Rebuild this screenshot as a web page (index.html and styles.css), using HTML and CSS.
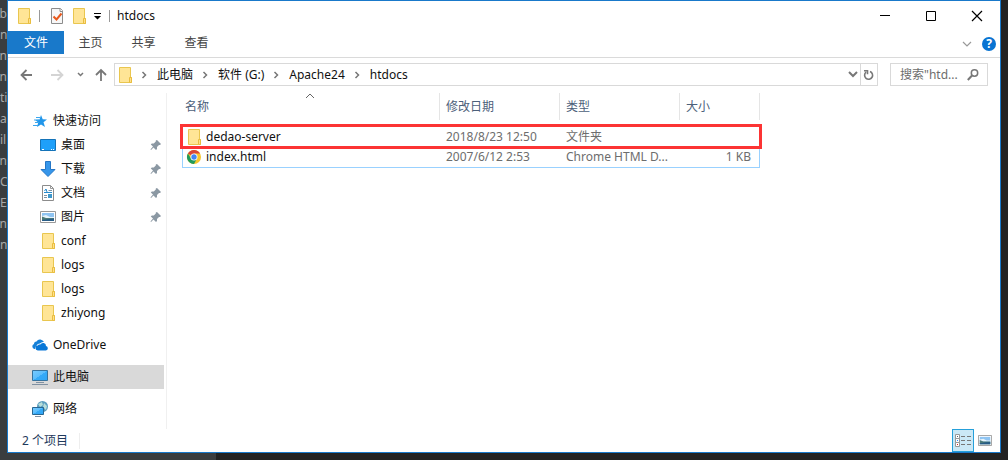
FILE: index.html
```html
<!DOCTYPE html>
<html lang="zh-CN">
<head>
<meta charset="utf-8">
<title>htdocs</title>
<link rel="stylesheet" href="styles.css">
</head>
<body>
<svg class="defs" aria-hidden="true">
  <symbol id="folder" viewBox="0 0 16 16"><path d="M2.500.5h11v10h1v5h-12z" fill="#ffe596" stroke="#e9c64f"/><path d="M12.500 15.500v-5h2v5z" fill="#ffe08a" stroke="#e9bd40"/></symbol>
  <symbol id="pin" viewBox="0 0 12 12"><path d="M7 1l4 4-1 1-1 0-2 2 0 2-1 1-2.500-2.500L1 11l-.5-.5L3 7.500.8 5.500l1-1h2l2-2V1.500z" fill="#8b98a3"/></symbol>
  <symbol id="chev" viewBox="0 0 6 8"><path d="M1.500 1l3 3-3 3" fill="none" stroke="#777" stroke-width="1.500"/></symbol>
  <symbol id="photo" viewBox="0 0 16 12"><path d="M.5.500h15v11H.5z" fill="#fff" stroke="#999"/><path d="M2 2h12v8H2z" fill="#8fc4f2"/><path d="M2 5l4-1 4 2h4v1H2z" fill="#e6f3fb"/><path d="M2 5.500l4 1.500 8 0v3H2z" fill="#4c7b78"/><path d="M2 9l7-1 5-.5V10H2z" fill="#275c86"/></symbol>
  <linearGradient id="screen" x2="1" y2="1"><stop stop-color="#78cbff"/><stop offset=".5" stop-color="#5bbdfc"/><stop offset=".5" stop-color="#35aaf8"/><stop offset="1" stop-color="#2fa5f5"/></linearGradient>
</svg>
<div class="desktop">
  <div class="editor" aria-hidden="true"><span class="tail">ub</span><span>nt</span><span class="tail">in</span><span class="tail">n</span><span>ti</span><span>a</span><span>il</span><span class="tail">n</span><span>CI</span><span>EA</span><span class="tail">in</span><span>na</span></div>
  <main class="window">
    <header class="titlebar">
      <svg class="i16"><use href="#folder"/></svg>
      <span class="sep sep-first"></span>
      <button class="plain" aria-label="属性"><svg class="i16" viewBox="0 0 16 16"><path d="M2.500.5h9l2 2v13h-11z" fill="#f7f7f7" stroke="#8c8c8c"/><path d="M11 .5v3h3" fill="#fff" stroke="#8c8c8c"/><path d="M4.500 8.500l3 3 5-6" fill="none" stroke="#e8581c" stroke-width="2"/></svg></button>
      <button class="plain new-folder" aria-label="新建文件夹"><svg class="i16"><use href="#folder"/></svg></button>
      <button class="plain customize" aria-label="自定义"><svg width="8" height="8" viewBox="0 0 8 8"><path d="M0 1h7v1H0zM0 4h7L3.500 7.500z"/></svg></button>
      <span class="sep"></span>
      <h1>htdocs</h1>
      <div class="controls">
        <button class="plain" aria-label="最小化"><svg width="12" height="12" viewBox="0 0 12 12"><path d="M1 5.500h10" stroke="#000"/></svg></button>
        <button class="plain" aria-label="最大化"><svg width="12" height="12" viewBox="0 0 12 12"><path d="M1.500 1.500h9v9h-9z" fill="none" stroke="#000"/></svg></button>
        <button class="plain" aria-label="关闭"><svg width="12" height="12" viewBox="0 0 12 12"><path d="M1 1l10 10M11 1L1 11" stroke="#000" stroke-width="1.200"/></svg></button>
      </div>
    </header>
    <nav class="ribbon">
      <button class="tab file">文件</button><button class="tab">主页</button><button class="tab">共享</button><button class="tab">查看</button>
      <button class="plain expand" aria-label="展开功能区"><svg width="10" height="6" viewBox="0 0 10 6"><path d="M1 1l4 4 4-4" fill="none" stroke="#999" stroke-width="1.200"/></svg></button>
      <button class="help" aria-label="帮助">?</button>
    </nav>
    <div class="toolbar">
      <button class="plain" aria-label="后退"><svg width="14" height="12" viewBox="0 0 14 12"><path d="M12 6H2M6.500 1L1.500 6l5 5" fill="none" stroke="#777" stroke-width="1.800"/></svg></button>
      <button class="plain forward" aria-label="前进"><svg width="14" height="12" viewBox="0 0 14 12"><path d="M1 6h11M7.500 1l5 5-5 5" fill="none" stroke="#d4d4d4" stroke-width="1.800"/></svg></button>
      <button class="plain recent" aria-label="最近"><svg width="7" height="5" viewBox="0 0 7 5"><path d="M1 1l2.500 2.500L6 1" fill="none" stroke="#777" stroke-width="1.500"/></svg></button>
      <button class="plain up" aria-label="向上"><svg width="12" height="14" viewBox="0 0 12 14"><path d="M6 13V2M1 7l5-5 5 5" fill="none" stroke="#777" stroke-width="1.800"/></svg></button>
      <div class="address">
        <svg class="i16"><use href="#folder"/></svg>
        <ol class="crumbs">
          <li><svg class="chev"><use href="#chev"/></svg><a href="#pc">此电脑</a></li>
          <li><svg class="chev"><use href="#chev"/></svg><a href="#g">软件 (G:)</a></li>
          <li><svg class="chev"><use href="#chev"/></svg><a href="#apache">Apache24</a></li>
          <li><svg class="chev"><use href="#chev"/></svg><a href="#htdocs">htdocs</a></li>
        </ol>
        <button class="plain drop" aria-label="以前的位置"><svg width="10" height="7" viewBox="0 0 10 7"><path d="M1 1l4 4 4-4" fill="none" stroke="#777" stroke-width="2"/></svg></button>
        <button class="plain refresh" aria-label="刷新"><svg width="12" height="12" viewBox="0 0 12 12"><path d="M7 2.500A4 4 0 1 1 3 3.200M1 1.700h3.500v3.500" fill="none" stroke="#777" stroke-width="1.600"/></svg></button>
      </div>
      <label class="search"><input type="text" placeholder='搜索"htd...' aria-label="搜索"><svg width="12" height="12" viewBox="0 0 12 12"><circle cx="7.500" cy="4" r="3.200" fill="none" stroke="#777" stroke-width="1.500"/><path d="M5 6.500L.8 11" stroke="#777" stroke-width="2"/></svg></label>
    </div>
    <div class="content">
      <nav class="tree">
        <a class="root" href="#quick"><svg class="i16" viewBox="0 0 16 16"><path d="M9 2l1.700 4.200 4.300.3-3.500 2.700 1.500 4.800-4-2.500L5 14l1.200-4.500-3-2.500 4.300-.5z" fill="#2196ea"/><path d="M4 4.500h4M2 7h5M3 9.500h4M1 12.500h5" stroke="#3aa6ee"/></svg>快速访问</a>
        <a href="#desktop"><svg class="i16" viewBox="0 0 16 16"><path d="M.5 2.500h15v11H.5z" fill="#1ea0fa" stroke="#1473b8"/><path d="M2 12.500h2M11 12.500h1M13 12.500h1" stroke="#fff"/></svg>桌面<svg class="pin"><use href="#pin"/></svg></a>
        <a href="#downloads"><svg class="i16" viewBox="0 0 16 16"><path d="M5.500.500h5v8h4.500l-7 7-7-7h4.500z" fill="#3696ea" stroke="#2476c6"/></svg>下载<svg class="pin"><use href="#pin"/></svg></a>
        <a href="#documents"><svg class="i16" viewBox="0 0 16 16"><path d="M2.500.5h8l3 3v12h-11z" fill="#fff" stroke="#8c8c8c"/><path d="M10.500.5v3h3" fill="none" stroke="#999"/><path d="M8.500 5.500H12M4 10.500h3M4 12.500h3" stroke="#7e93a4"/><path d="M4 7.500h8M4.500 6l1.500-2 1 3" fill="none" stroke="#258acd"/><path d="M8 9h4v4H8z" fill="#3d97cb"/></svg>文档<svg class="pin"><use href="#pin"/></svg></a>
        <a href="#pictures"><svg class="i16" viewBox="0 -2 16 16"><use href="#photo" width="16" height="12"/></svg>图片<svg class="pin"><use href="#pin"/></svg></a>
        <a href="#conf"><svg class="i16"><use href="#folder"/></svg>conf</a>
        <a href="#logs"><svg class="i16"><use href="#folder"/></svg>logs</a>
        <a href="#logs2"><svg class="i16"><use href="#folder"/></svg>logs</a>
        <a href="#zhiyong"><svg class="i16"><use href="#folder"/></svg>zhiyong</a>
        <a class="root gap" href="#onedrive"><svg class="i16" viewBox="0 0 16 16"><path d="M2.500 12A2.600 2.600 0 0 1 2 7q0-2.500 2.500-2.500Q6 2 8.500 2.500T12 5Q9.500 4.500 8 6.500 5 6.500 4.500 9 2.500 10 3 12z" fill="#1580d8"/><path d="M6 13.500a2.500 2.500 0 0 1-.2-5Q6.500 7 8.300 7.500 9.500 5.500 11.800 6t2.200 3a2.300 2.300 0 0 1 0 4.500z" fill="#0877d7"/></svg>OneDrive</a>
        <a class="root gap selected" href="#pc"><svg class="i16" viewBox="0 0 16 16"><path d="M.5 1.500h15v10H.5z" fill="url(#screen)" stroke="#36739f"/><path d="M4 13.500h8M0 15.500h16" stroke="#8091a2"/></svg>此电脑</a>
        <a class="root gap" href="#network"><svg class="i16" viewBox="0 0 16 16"><circle cx="10.500" cy="5.500" r="5.500" fill="#5a9dbe"/><path d="M6 3l4-2 1 3-3 2zM12 2l3 3-1 4-3-3z" fill="#b7deda"/><path d="M.5 6.500h11v7H.5z" fill="url(#screen)" stroke="#286792"/><path d="M3 15.500h6" stroke="#8091a2"/></svg>网络</a>
      </nav>
      <section class="files">
        <svg class="sort" width="10" height="6" viewBox="0 0 10 6"><path d="M1 5l4-4 4 4" fill="none" stroke="#666"/></svg>
        <table>
          <colgroup><col class="c-name"><col class="c-date"><col class="c-type"><col class="c-size"></colgroup>
          <thead><tr><th>名称</th><th>修改日期</th><th>类型</th><th>大小</th></tr></thead>
          <tbody>
            <tr class="marked"><td><span class="name"><svg class="i16"><use href="#folder"/></svg>dedao-server</span></td><td>2018/8/23 12:50</td><td>文件夹</td><td></td></tr>
            <tr class="focused"><td><span class="name"><svg class="i16" viewBox="0 0 16 16"><circle cx="8" cy="8" r="7" fill="#f6c52c"/><path d="M8 8L1.900 4.500A7 7 0 0 1 14.100 4.500H8z" fill="#da4438"/><path d="M1.900 4.500A7 7 0 0 0 8 15l3-5.500L8 8 5 9.500z" fill="#219b5b"/><circle cx="8" cy="8" r="3.500" fill="#fff"/><circle cx="8" cy="8" r="2.700" fill="#4285f4"/></svg>index.html</span></td><td>2007/6/12 2:53</td><td>Chrome HTML D...</td><td class="size">1 KB</td></tr>
          </tbody>
        </table>
      </section>
    </div>
    <footer class="status">
      <span class="count">2 个项目</span>
      <button class="view active" aria-label="详细信息"><svg width="16" height="14" viewBox="0 0 16 14"><path d="M.5.500h4v4h-4zM.5 4.500h4v4h-4zM.5 8.500h4v4h-4z" fill="#fff" stroke="#999"/><path d="M6 2.500h4M12 2.500h4M6 6.500h4M12 6.500h4M6 10.500h4M12 10.500h4" stroke="#777"/><path d="M2 2h1v1H2z" fill="#567"/><path d="M2 6h1v1H2z" fill="#38f"/><path d="M2 10h1v1H2z" fill="#d22"/></svg></button>
      <button class="view" aria-label="大图标"><svg width="14" height="11" viewBox="0 0 16 12" preserveAspectRatio="none"><use href="#photo" width="16" height="12"/></svg></button>
    </footer>
  </main>
</div>
</body>
</html>
```
FILE: styles.css
```css
* { box-sizing: border-box; }
body { margin: 0; font: 12px/16px "Noto Sans", "Noto Sans CJK SC", sans-serif; color: #111; }
button, input { font: inherit; color: inherit; }
a { color: inherit; text-decoration: none; }
svg { display: block; flex: none; }
.defs { position: absolute; width: 0; height: 0; }
.i16 { width: 16px; height: 16px; }
.desktop { display: flex; min-height: 100vh; padding: 0 7px 7px 0; background: linear-gradient(90deg, #3a3d3f 216px, #222 216px); }
.editor { display: flex; flex-direction: column; align-items: flex-start; width: 7px; padding-top: 3px; overflow: hidden; color: #a9a9a9; line-height: 21px; }
.tail { align-self: flex-end; }
.window { flex: 1; min-width: 0; display: flex; flex-direction: column; background: #fff; border: 1px solid #1979ca; }
.plain { display: flex; align-items: center; justify-content: center; padding: 0; border: 0; background: none; }
.titlebar { display: flex; align-items: center; height: 30px; padding: 0 8px; }
.sep { width: 1px; height: 12px; background: #999; }
.sep-first { margin: 0 9px 0 7px; }
.new-folder { margin: 0 7px 0 6px; }
.customize { margin-right: 7px; }
h1 { margin: 0 0 0 7px; font-size: 12px; font-weight: 400; }
.controls { display: flex; margin-left: auto; gap: 34px; padding-right: 9px; }
.ribbon { display: flex; align-items: center; height: 27px; padding-right: 4px; border-bottom: 1px solid #dadada; }
.tab { align-self: stretch; width: 53px; margin-bottom: 3px; padding: 0; border: 0; background: none; color: #444; }
.file { width: 56px; background: #1979ca; color: #fff; }
.expand { margin: 0 10px 0 auto; }
.help { width: 14px; height: 14px; padding: 0; border: 0; border-radius: 50%; background: #0873d2; color: #fff; font-weight: 700; line-height: 14px; }
.toolbar { display: flex; align-items: center; padding: 5px 12px 7px 12px; }
.forward { margin-left: 16px; }
.recent { margin-left: 13px; }
.up { margin: 0 7px 0 11px; }
.address { flex: 1; display: flex; align-items: center; height: 23px; padding-left: 2px; border: 1px solid #d9d9d9; }
.crumbs { display: flex; margin: 0; padding: 0; list-style: none; }
.crumbs li { display: flex; align-items: center; }
.chev { width: 6px; height: 8px; margin: 0 10px 0 8px; }
.crumbs li + li .chev { margin-left: 9px; }
.drop { margin: 0 2px 0 auto; }
.refresh { align-self: stretch; width: 17px; border-left: 1px solid #d9d9d9; }
.search { display: flex; align-items: center; width: 98px; height: 23px; margin-left: 12px; padding: 0 8px 0 9px; border: 1px solid #d9d9d9; }
.search input { flex: 1; min-width: 0; padding: 0; border: 0; outline: 0; background: none; }
.search input::placeholder { color: #6d6d6d; opacity: 1; }
.content { flex: 1; display: flex; }
.tree { width: 159px; padding: 16px 2px 0 0; border-right: 1px solid #f0f0f0; }
.tree a { display: flex; align-items: center; gap: 5px; height: 24px; padding: 0 2px 0 32px; }
.tree .root { padding-left: 24px; }
.tree .gap { margin-top: 8px; }
.tree .selected { background: #d9d9d9; }
.pin { width: 12px; height: 12px; margin-left: auto; }
.files { flex: 1; position: relative; padding-left: 15px; }
.sort { position: absolute; left: 138px; top: 0; }
table { table-layout: fixed; width: 578px; border-collapse: separate; border-spacing: 0; }
.c-name { width: 258px; }
.c-date, .c-type { width: 120px; }
.c-size { width: 80px; }
th { height: 27px; padding: 1px 0 0 6px; border-right: 1px solid #e5e5e5; color: #4c607a; font-weight: 400; text-align: left; }
th:first-child { padding-left: 3px; }
thead::after { content: ""; display: block; height: 6px; }
td { height: 21px; padding: 0 0 0 6px; color: #6d6d6d; white-space: nowrap; }
td:first-child { padding-left: 4px; color: #111; }
.marked { position: relative; outline: 3px solid #fc3434; outline-offset: -1px; z-index: 1; }
.focused td { border-bottom: 1px solid #99d1ff; }
.focused td:first-child { border-left: 1px solid #99d1ff; padding-left: 3px; }
.name { display: flex; align-items: center; gap: 4px; }
.size { padding-right: 8px; text-align: right; }
.focused .size { border-right: 1px solid #99d1ff; }
.status { display: flex; align-items: center; height: 23px; padding-right: 4px; color: #1e395b; }
.count { margin: 0 auto 0 14px; padding-right: 11px; border-right: 1px solid #eee; }
.view { display: flex; align-items: center; justify-content: center; width: 22px; height: 23px; padding: 0; border: 0; background: none; }
.active { border: 1px solid #26a0da; background: #cbe8f6; }
```
